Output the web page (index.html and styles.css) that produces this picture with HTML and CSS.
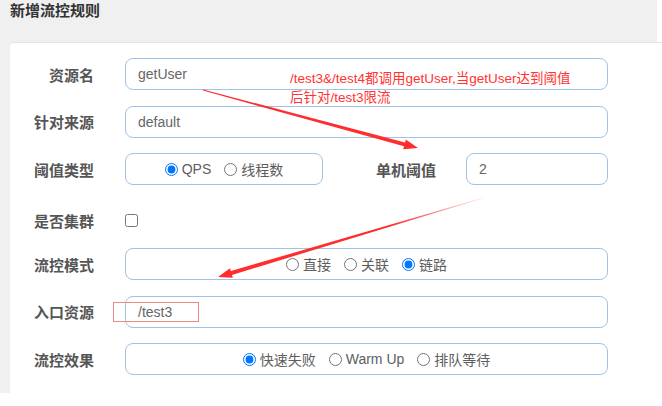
FILE: index.html
```html
<!DOCTYPE html>
<html lang="zh-CN">
<head>
<meta charset="UTF-8">
<title>新增流控规则</title>
<link rel="stylesheet" href="styles.css">
</head>
<body>
<div class="page">
  <div class="header">新增流控规则</div>
  <div class="panel">
    <div class="form">
      <div class="row">
        <span class="label">资源名</span>
        <div class="box box-wide input">getUser</div>
      </div>
      <div class="row">
        <span class="label">针对来源</span>
        <div class="box box-wide input">default</div>
      </div>
      <div class="row">
        <span class="label">阈值类型</span>
        <div class="box box-type radios">
          <label class="radio"><input type="radio" name="grade" checked>QPS</label>
          <label class="radio"><input type="radio" name="grade">线程数</label>
        </div>
        <span class="label label-mid">单机阈值</span>
        <div class="box box-count input">2</div>
      </div>
      <div class="row row-check">
        <span class="label">是否集群</span>
        <input class="check" type="checkbox">
      </div>
      <div class="row">
        <span class="label">流控模式</span>
        <div class="box box-wide radios">
          <label class="radio"><input type="radio" name="strategy">直接</label>
          <label class="radio"><input type="radio" name="strategy">关联</label>
          <label class="radio"><input type="radio" name="strategy" checked>链路</label>
        </div>
      </div>
      <div class="row">
        <span class="label">入口资源</span>
        <div class="box box-wide input">/test3</div>
      </div>
      <div class="row">
        <span class="label">流控效果</span>
        <div class="box box-wide radios">
          <label class="radio"><input type="radio" name="behavior" checked>快速失败</label>
          <label class="radio"><input type="radio" name="behavior">Warm Up</label>
          <label class="radio"><input type="radio" name="behavior">排队等待</label>
        </div>
      </div>
    </div>
  </div>

  <!-- annotations drawn on top of the screenshot -->
  <div class="note">/test3&amp;/test4都调用getUser,当getUser达到阈值<br>后针对/test3限流</div>
  <div class="mark"></div>
  <svg class="arrows" width="657" height="393" viewBox="0 0 657 393">
    <defs>
      <linearGradient id="fade" gradientUnits="userSpaceOnUse" x1="483" y1="198" x2="390" y2="226">
        <stop offset="0" stop-color="#ff2d2d" stop-opacity="0.15"/>
        <stop offset="1" stop-color="#ff2d2d" stop-opacity="1"/>
      </linearGradient>
    </defs>
    <polygon fill="#ff2d2d" points="203.1,89.5 405,142.5 405.8,139.6 418,148 403.2,149.2 404,146.3 202.9,90.5"/>
    <polygon fill="url(#fade)" points="482.9,197.7 230.8,271.1 230,268.2 218,277 232.8,277.8 232,274.9 483.1,198.3"/>
  </svg>
</div>
</body>
</html>
```

FILE: styles.css
```css
body {
  margin: 0;
  background: #ffffff;
  font-family: "Liberation Sans", "Noto Sans CJK SC", sans-serif;
}

.page {
  position: relative;
  width: 657px;
  height: 393px;
  background: #f0f0f0;
}

.header {
  height: 42px;
  padding-left: 10px;
  font-size: 15px;
  line-height: 22px;
  font-weight: bold;
  color: #333333;
  box-sizing: border-box;
}

.panel {
  margin-left: 10px;
  width: 652px;
  height: 351px;
  padding-top: 15px;
  background: #ffffff;
  border-top: 1px solid #e4e4e4;
  border-top-left-radius: 4px;
  box-sizing: border-box;
}

.form {
  display: flex;
  flex-direction: column;
  gap: 15.5px;
}

.row {
  display: flex;
  align-items: center;
  height: 32px;
}

.row-check {
  height: 25px;
  padding-top: 7px;
}

.label {
  flex: none;
  width: 84px;
  margin-right: 31px;
  text-align: right;
  font-size: 15px;
  font-weight: bold;
  color: #555555;
}

.label-mid {
  width: 113px;
  margin-right: 30px;
}

/* bordered fields */
.box {
  display: flex;
  align-items: center;
  height: 32px;
  border: 1px solid #9fc2e7;
  border-radius: 8px;
  box-sizing: border-box;
  font-size: 14px;
  color: #5e5e5e;
}

.box-wide {
  width: 483px;
}

.box-type {
  width: 198px;
}

.box-count {
  width: 142px;
}

.input {
  padding-left: 12px;
  color: #666666;
}

.radios {
  justify-content: center;
  gap: 13px;
}

.radio {
  display: flex;
  align-items: center;
}

.radio input {
  margin: 0 4px 0 0;
}

.check {
  margin: 0;
}

/* Annotations */
.note {
  position: absolute;
  left: 290px;
  top: 69px;
  font-size: 13.5px;
  line-height: 19px;
  color: #ff3333;
  white-space: nowrap;
}

.mark {
  position: absolute;
  left: 113px;
  top: 302px;
  width: 86px;
  height: 20px;
  border: 1px solid #f08a8a;
  box-sizing: border-box;
}

.arrows {
  position: absolute;
  left: 0;
  top: 0;
  pointer-events: none;
}
```
